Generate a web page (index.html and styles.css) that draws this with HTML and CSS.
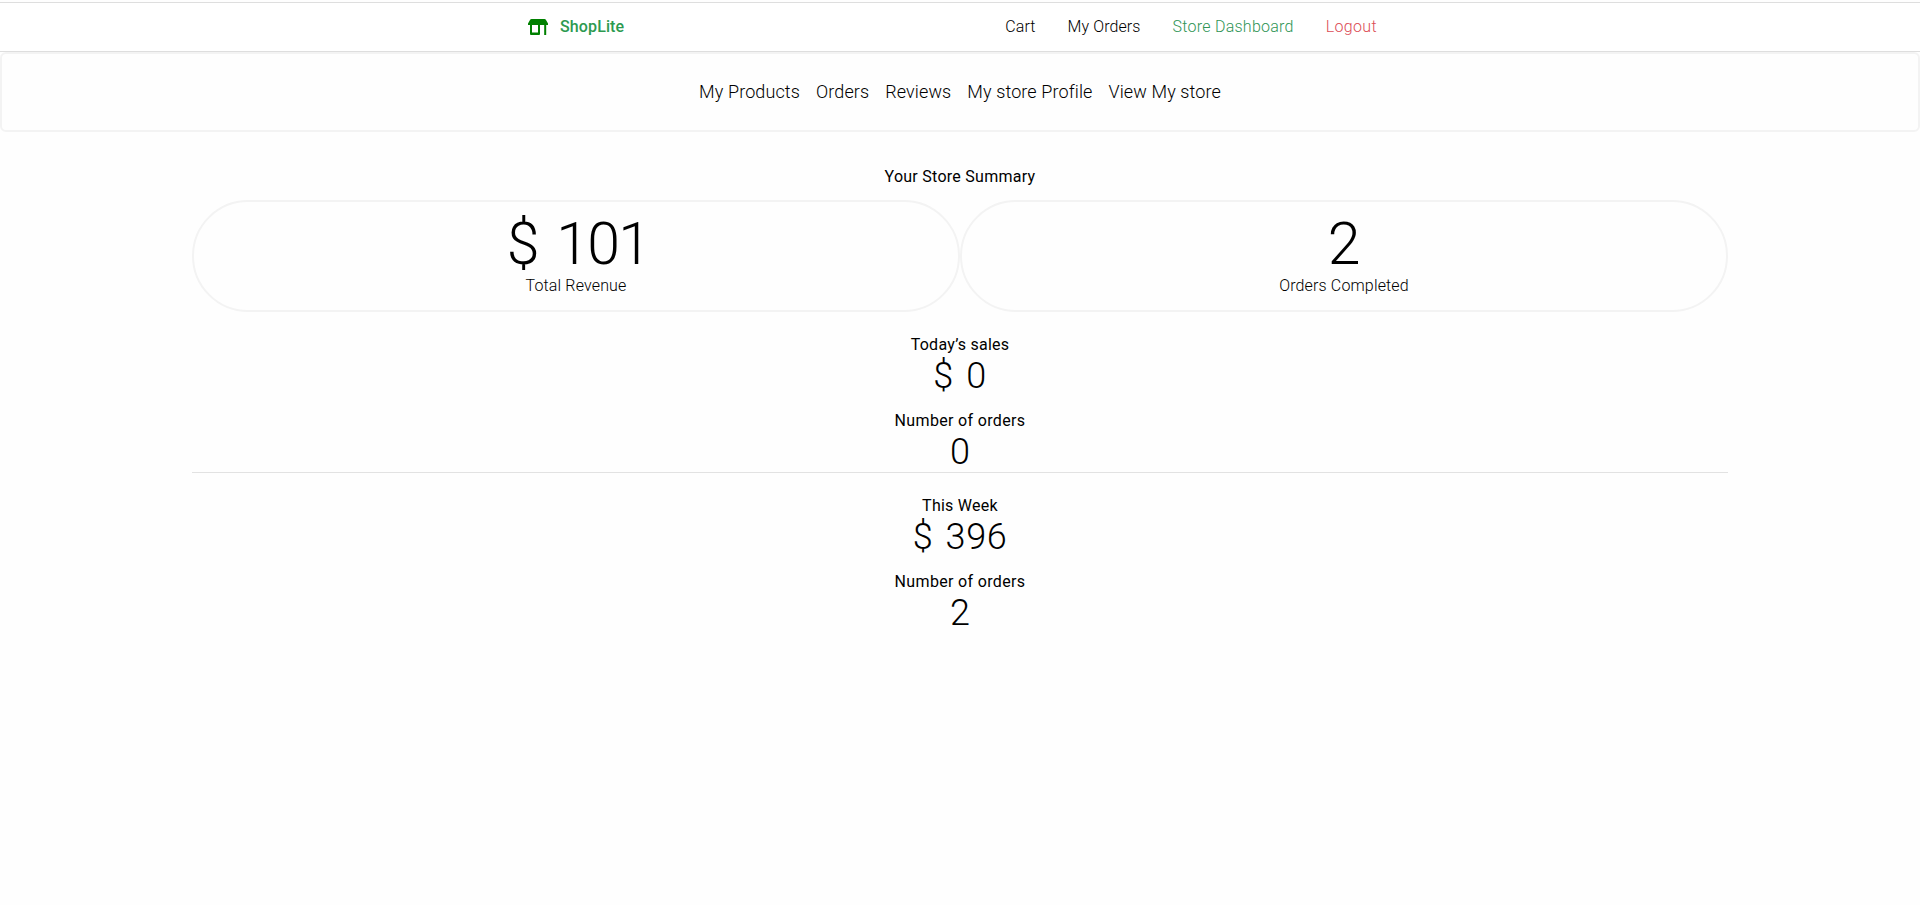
FILE: index.html
```html
<!DOCTYPE html>
<html lang="en">
<head>
<meta charset="utf-8">
<title>ShopLite</title>
<link rel="stylesheet" href="styles.css">
</head>
<body>
<header class="topbar">
  <a class="brand">
    <svg class="brand-icon" viewBox="0 0 20 16" width="20" height="16"><path d="M3.500 0h13q1 0 1.500 1l2 3.500V6h-1.800v10h-2V6H12v9q0 1-1 1H3q-1 0-1-1V6H0V4.500L2 1q.5-1 1.500-1zM4 6v7.400h6V6z" fill="#008000" fill-rule="evenodd"/></svg>
    <span class="brand-name">ShopLite</span>
  </a>
  <nav class="account">
    <a class="cart">Cart</a>
    <a class="my-orders">My Orders</a>
    <a class="dashboard">Store Dashboard</a>
    <a class="logout">Logout</a>
  </nav>
</header>
<nav class="store-nav">
  <a>My Products</a>
  <a>Orders</a>
  <a>Reviews</a>
  <a>My store Profile</a>
  <a>View My store</a>
</nav>
<main class="summary">
  <h1 class="title">Your Store Summary</h1>
  <div class="cards">
    <section class="card"><strong class="total money">$ 101</strong><span class="caption">Total Revenue</span></section>
    <section class="card"><strong class="total">2</strong><span class="caption">Orders Completed</span></section>
  </div>
  <section class="period today">
    <h2 class="label">Today’s sales</h2>
    <p class="figure sales">$ 0</p>
    <h2 class="label orders-label">Number of orders</h2>
    <p class="figure">0</p>
  </section>
  <section class="period">
    <h2 class="label">This Week</h2>
    <p class="figure sales">$ 396</p>
    <h2 class="label orders-label">Number of orders</h2>
    <p class="figure">2</p>
  </section>
</main>
</body>
</html>
```
FILE: styles.css
```css
* { box-sizing: border-box; margin: 0; }
body { padding-top: 2px; background: #fefefe; color: #000; font: 300 16px/24px Roboto, sans-serif; }
a { white-space: nowrap; }
.topbar { display: flex; justify-content: space-between; align-items: center; height: 50px; padding: 0 543px 0 528px; border-top: 1px solid #dedede; border-bottom: 1px solid #dedede; background: #fff; }
.brand { display: flex; align-items: center; gap: 12px; color: #2d9a50; font-weight: 500; letter-spacing: .12px; }
.brand-icon { display: block; }
.account { display: flex; gap: 32px; }
.cart, .my-orders { letter-spacing: .1px; }
.dashboard { color: #2f9455; letter-spacing: .25px; }
.logout { color: #dc4c55; letter-spacing: .35px; }
.store-nav { display: flex; justify-content: center; align-items: center; gap: 16px; height: 80px; border: 2px solid #f3f3f3; border-radius: 6px; font-size: 18px; letter-spacing: .11px; }
.summary { width: 1536px; margin: 33px auto 0; text-align: center; }
.title { font-size: 16px; font-weight: 400; line-height: 24px; letter-spacing: .27px; }
.cards { display: flex; margin-top: 11px; }
.card { flex: 1; height: 112px; padding: 12px 0; border: 2px solid #f3f3f3; border-radius: 60px; }
.total { display: block; font-size: 59px; font-weight: 300; line-height: 60px; }
.money { padding-left: 4px; letter-spacing: -1.8px; word-spacing: 6px; }
.caption { display: block; line-height: 24px; letter-spacing: .15px; }
.period { padding-top: 21px; }
.today { height: 161px; border-bottom: 1px solid #e2e2e2; }
.label { font-size: 16px; font-weight: 400; line-height: 24px; letter-spacing: .25px; }
.orders-label { letter-spacing: .34px; }
.figure { height: 52px; font-size: 36px; line-height: 38px; }
.sales { letter-spacing: .6px; word-spacing: 3px; }
```
